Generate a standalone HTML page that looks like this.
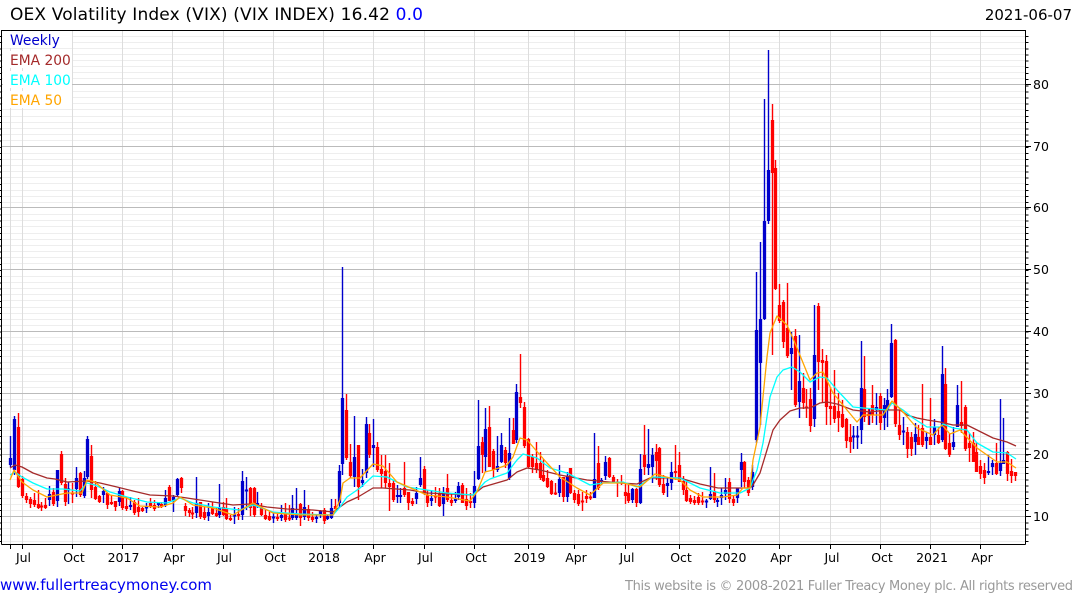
<!DOCTYPE html>
<html><head><meta charset="utf-8"><title>OEX Volatility Index</title>
<style>html,body{margin:0;padding:0;background:#fff;width:1075px;height:600px;overflow:hidden}svg{display:block}text{font-family:"DejaVu Sans","Liberation Sans",sans-serif}</style></head>
<body>
<svg width="1075" height="600" viewBox="0 0 1075 600" xmlns="http://www.w3.org/2000/svg">
<rect width="1075" height="600" fill="#fff"/>
<g shape-rendering="crispEdges" fill="none">
<path stroke="#eee" d="M2 541.5H1025M2 535.5H1025M2 528.5H1025M2 522.5H1025M2 510.5H1025M2 504.5H1025M2 498.5H1025M2 491.5H1025M2 485.5H1025M2 479.5H1025M2 473.5H1025M2 467.5H1025M2 461.5H1025M2 448.5H1025M2 442.5H1025M2 436.5H1025M2 430.5H1025M2 424.5H1025M2 417.5H1025M2 411.5H1025M2 405.5H1025M2 399.5H1025M2 387.5H1025M2 381.5H1025M2 374.5H1025M2 368.5H1025M2 362.5H1025M2 356.5H1025M2 350.5H1025M2 344.5H1025M2 337.5H1025M2 325.5H1025M2 319.5H1025M2 313.5H1025M2 307.5H1025M2 300.5H1025M2 294.5H1025M2 288.5H1025M2 282.5H1025M2 276.5H1025M2 263.5H1025M2 257.5H1025M2 251.5H1025M2 245.5H1025M2 239.5H1025M2 233.5H1025M2 226.5H1025M2 220.5H1025M2 214.5H1025M2 202.5H1025M2 196.5H1025M2 190.5H1025M2 183.5H1025M2 177.5H1025M2 171.5H1025M2 165.5H1025M2 159.5H1025M2 153.5H1025M2 140.5H1025M2 134.5H1025M2 128.5H1025M2 122.5H1025M2 116.5H1025M2 109.5H1025M2 103.5H1025M2 97.5H1025M2 91.5H1025M2 78.5H1025M2 72.5H1025M2 66.5H1025M2 60.5H1025M2 54.5H1025M2 48.5H1025M2 42.5H1025M2 36.5H1025"/>
<path stroke="#ddd" d="M10.5 31V544M22.5 31V544M72.5 31V544M122.5 31V544M172.5 31V544M223.5 31V544M273.5 31V544M323.5 31V544M373.5 31V544M424.5 31V544M474.5 31V544M528.5 31V544M574.5 31V544M625.5 31V544M679.5 31V544M729.5 31V544M779.5 31V544M830.5 31V544M880.5 31V544M930.5 31V544M980.5 31V544"/>
<path stroke="#bbb" d="M2 84.5H1025M2 146.5H1025M2 207.5H1025M2 269.5H1025M2 331.5H1025M2 393.5H1025M2 454.5H1025M2 516.5H1025"/>
</g>
<g fill="#fff"><rect x="3" y="31" width="69" height="17"/><rect x="3" y="51" width="69" height="17"/><rect x="3" y="71" width="69" height="17"/><rect x="3" y="91" width="69" height="17"/></g>

<g fill="none">
<path stroke="#0000cc" stroke-width="1.4" d="M10.5 436V467M14.5 416V475M49.5 486V506M57.5 470V507M68.5 482V504M76.5 467V497M84.5 471V498M87.5 436V479M103.5 487V503M119.5 488V506M130.5 497V510M146.5 503V513M158.5 502V508M165.5 490V507M173.5 495V512M177.5 478V497M196.5 477V518M208.5 503V521M219.5 484V518M234.5 507V524M242.5 471V520M246.5 477V510M257.5 492V508M273.5 512V523M281.5 505V521M292.5 495V520M296.5 488V520M304.5 490V520M316.5 515V523M320.5 510V518M327.5 515V520M331.5 499V519M339.5 465V507M342.5 267V475M354.5 416V487M362.5 469V487M366.5 417V478M373.5 419V467M397.5 485V503M400.5 488V503M416.5 487V504M420.5 457V487M431.5 490V506M443.5 487V516M455.5 492V503M458.5 482V500M474.5 471V508M478.5 400V480M485.5 408V472M497.5 436V472M501.5 433V463M509.5 418V480M516.5 384V443M559.5 465V497M567.5 472V502M594.5 433V498M601.5 478V485M605.5 456V480M632.5 488V503M640.5 454V504M648.5 429V475M652.5 448V483M667.5 478V497M671.5 462V490M706.5 499V508M710.5 467V500M717.5 498V507M721.5 488V505M725.5 478V500M737.5 488V503M741.5 453V487M752.5 465V490M756.5 272V443M760.5 242V425M764.5 99V320M768.5 50V224M791.5 332V390M799.5 335V418M814.5 305V427M853.5 426V449M857.5 426V449M861.5 341V444M869.5 408V425M876.5 393V425M884.5 398V430M887.5 389V427M891.5 324V398M903.5 417V445M915.5 423V455M926.5 432V449M934.5 419V445M942.5 346V442M953.5 427V450M957.5 385V427M988.5 455V475M992.5 460V475M1000.5 399V476M1003.5 418V464"/>
<path stroke="#0000cc" stroke-width="3.3" d="M10.5 458V465M14.5 419V470M49.5 494V500M57.5 470V501M68.5 488.5V490.5M76.5 478V489M84.5 478V496M87.5 439V477M103.5 491V495M119.5 491V502M130.5 505V507M146.5 506.5V508.5M158.5 503V505M165.5 498V505M173.5 497V501M177.5 479V495M196.5 503V513M208.5 512V516M219.5 508V515M234.5 514.5V516.5M242.5 481V515M246.5 489.5V491.5M257.5 503V505M273.5 516.5V518.5M281.5 515V518M292.5 508V518M296.5 515V518M304.5 507V517M316.5 517V519M320.5 511V515M327.5 516V519M331.5 508V518M339.5 471V503M342.5 398V464M354.5 457V477M362.5 480V483M366.5 424V473M373.5 445V448M397.5 495V497M400.5 495V497M416.5 493V499M420.5 478V485M431.5 498V501M443.5 493V504M455.5 498V501M458.5 486V497M474.5 486V503M478.5 446V479M485.5 429V457M497.5 466V470M501.5 445V462M509.5 453V478M516.5 392V440M559.5 479V493M567.5 476V497M594.5 479V498M601.5 480V482M605.5 462V476M632.5 489V500M640.5 469V503M648.5 464V468M652.5 455V467M667.5 483V486M671.5 472V483M706.5 500.5V502.5M710.5 494V499M717.5 500V502M721.5 495V498M725.5 490V494M737.5 488V498M741.5 462V470M752.5 472V487M756.5 330V440M760.5 319V363M764.5 221V319M768.5 170V221M791.5 348V354M799.5 381V402M814.5 355V419M853.5 435.5V437.5M857.5 435.5V437.5M861.5 388V430M869.5 412V415M876.5 407V410M884.5 405V418M887.5 400V410M891.5 343V397M903.5 430.5V432.5M915.5 434V442M926.5 437V441M934.5 427V435M942.5 374V440M953.5 442V447M957.5 405V427M988.5 471V473M992.5 463V467M1000.5 463V471M1003.5 460V464"/>
<path stroke="#ff0000" stroke-width="1.4" d="M18.5 413V488M22.5 476V498M26.5 493V503M30.5 497V508M34.5 493V507M38.5 490V509M41.5 502V511M45.5 498V509M53.5 488V506M61.5 451V485M65.5 478V506M72.5 483V503M80.5 472V497M91.5 445V498M95.5 481V500M99.5 495V503M107.5 493V509M111.5 495V505M115.5 501V511M122.5 490V510M126.5 497V511M134.5 500V515M138.5 498V517M142.5 507V512M150.5 498V508M154.5 500V511M161.5 502V508M169.5 485V501M181.5 477V493M185.5 503V516M189.5 508V517M192.5 507V519M200.5 502V519M204.5 507V520M212.5 502V515M216.5 508V517M223.5 502V516M226.5 498V520M230.5 515V521M238.5 508V520M250.5 487V516M254.5 487V517M261.5 503V516M265.5 510V520M269.5 512V521M277.5 514V521M285.5 503V522M289.5 505V521M300.5 503V526M308.5 505V521M312.5 512V522M324.5 508V524M335.5 499V512M346.5 394V460M350.5 444V478M358.5 445V500M369.5 424V458M377.5 442V472M381.5 455V488M385.5 455V488M389.5 463V511M393.5 480V502M404.5 462V497M408.5 492V510M412.5 498V506M424.5 466V495M427.5 490V507M435.5 487V503M439.5 488V507M447.5 474V502M451.5 493V506M462.5 483V502M466.5 488V510M470.5 493V508M482.5 437V473M489.5 406V463M493.5 449V478M505.5 447V468M513.5 418V442M520.5 354V408M524.5 402V448M528.5 438V468M532.5 454V473M536.5 442V473M540.5 452V480M543.5 459V482M547.5 470V488M551.5 480V495M555.5 483V495M563.5 477V502M570.5 468V494M574.5 490V503M578.5 490V506M582.5 492V511M586.5 490V503M590.5 492V500M598.5 446V490M609.5 457V478M613.5 475V483M617.5 479V497M621.5 475V485M625.5 483V504M628.5 483V503M636.5 488V507M644.5 425V475M656.5 444V480M659.5 447V487M663.5 475V495M675.5 445V480M679.5 452V482M683.5 476V495M686.5 480V502M690.5 495V504M694.5 496V505M698.5 493V505M702.5 492V505M714.5 473V503M729.5 478V503M733.5 495V506M744.5 461V488M748.5 477V496M772.5 104V355M775.5 160V290M779.5 284V323M783.5 300V348M787.5 283V358M795.5 329V407M803.5 373V409M806.5 389V418M810.5 388V432M818.5 303V390M822.5 349V403M826.5 355V425M830.5 387V425M834.5 370V423M838.5 393V432M842.5 400V428M846.5 418V448M850.5 424V453M864.5 356V422M868.5 408V425M872.5 385V423M880.5 393V430M895.5 339V427M899.5 410V440M907.5 427V458M911.5 432V456M918.5 425V445M922.5 384V447M930.5 398V445M938.5 427V444M945.5 368V450M949.5 433V457M961.5 381V433M965.5 405V451M969.5 433V462M973.5 432V462M976.5 442V470M980.5 460V479M984.5 463V484M996.5 443V475M1007.5 451V481M1011.5 459V483M1015.5 472V481"/>
<path stroke="#ff0000" stroke-width="3.3" d="M18.5 427V487M22.5 479V496M26.5 496V500M30.5 499V504M34.5 500V505M38.5 504V508M41.5 505.5V507.5M45.5 505V508M53.5 492V504M61.5 454V483M65.5 484V502M72.5 492.5V494.5M80.5 473V495M91.5 456V490M95.5 487V499M99.5 496V502M107.5 493V505M111.5 502V504M115.5 501V507M122.5 491V508M126.5 506V509M134.5 502V513M138.5 507V512M142.5 508V511M150.5 503V507M154.5 505V509M161.5 504V507M169.5 487V501M181.5 478V488M185.5 506V511M189.5 510V513M192.5 512.5V514.5M200.5 502V517M204.5 512V518M212.5 508V514M216.5 513V516M223.5 507V515M226.5 508V519M230.5 518V520M238.5 514V516M250.5 488V508M254.5 488V515M261.5 508V515M265.5 515V519M269.5 516V520M277.5 517V519M285.5 513V520M289.5 517.5V519.5M300.5 504V518M308.5 509V518M312.5 517V520M324.5 510V521M335.5 506V509M346.5 410V458M350.5 462V476M358.5 445V487M369.5 433V455M377.5 447V470M381.5 469V474M385.5 471V483M389.5 483V487M393.5 483V500M404.5 488V495M408.5 492V503M412.5 501V504M424.5 469V493M427.5 495V503M435.5 495.5V497.5M439.5 493V506M447.5 488V500M451.5 500V503M462.5 485V503M466.5 499V506M470.5 501V503M482.5 442V455M489.5 427V467M493.5 451V470M505.5 450V463M513.5 430V444M520.5 397V403M524.5 407V446M528.5 439V467M532.5 457V467M536.5 463V470M540.5 463V478M543.5 475V481M547.5 478V487M551.5 481V494M555.5 492.5V494.5M563.5 477V497M570.5 468V493M574.5 493V500M578.5 494V504M582.5 500.5V502.5M586.5 496V499M590.5 496.5V498.5M598.5 463V488M609.5 458V477M613.5 477V482M617.5 481.5V483.5M621.5 481.5V483.5M625.5 492V496M628.5 493V501M636.5 489V503M644.5 455V467M656.5 452V461M659.5 448V485M663.5 484V493M675.5 471V473M679.5 465V482M683.5 481V490M686.5 490V501M690.5 498V502M694.5 500V503M698.5 497V503M702.5 500.5V502.5M714.5 491V500M729.5 482V499M733.5 499V503M744.5 462V482M748.5 480V493M772.5 120V173M775.5 168V289M779.5 305V321M783.5 302V342M787.5 328V356M795.5 336V405M803.5 388V403M806.5 406.5V408.5M810.5 399V426M818.5 306V362M822.5 360V363M826.5 361V407M830.5 406V409M834.5 406V419M838.5 411V418M842.5 414V427M846.5 419V441M850.5 437V442M864.5 389V417M868.5 414V416M872.5 405V415M880.5 396V423M895.5 340V424M899.5 425V435M907.5 432V449M911.5 437V449M918.5 437V445M922.5 428V445M930.5 437V445M938.5 435V443M945.5 384V449M949.5 443V455M961.5 422V426M965.5 407V449M969.5 443V448M973.5 443V462M976.5 452V472M980.5 466V474M984.5 470V478M996.5 463V474M1007.5 452V474M1011.5 471V476M1015.5 472V476"/>
</g>

<g fill="none" stroke-width="1.3" stroke-linejoin="round">
<polyline stroke="#a52a2a" points="10,468 15,465 22,467 33,473 47,478 55,479 67,482 87,481 100,483 117,487 133,491 150,495 173,496 187,498 213,502 233,505 250,504 267,507 287,509 313,510 333,512 340,507 347,502 358,497 373,488 383,488 410,490 427,493 473,495 483,487 507,480 517,472 527,468 540,470 560,475 587,480 620,483 637,484 650,478 680,478 700,484 718,488 750,488 753,485 760,473 767,450 773,430 780,420 790,411 800,408 810,408 820,403 827,402 837,404 853,410 870,412 887,410 900,410 907,415 917,418 927,420 940,422 953,425 967,425 977,430 993,438 1007,442 1016,446"/>
<polyline stroke="#00ffff" points="10,475 15,472 22,477 33,483 47,489 63,489 80,491 87,483 95,485 110,492 127,497 147,502 167,503 180,498 193,503 213,507 240,510 253,505 273,512 300,514 333,515 340,507 347,497 360,488 373,476 387,477 407,487 427,490 447,493 473,495 485,482 490,479 507,473 517,460 523,454 537,458 550,468 567,473 590,485 603,483 623,482 637,487 653,477 680,478 700,488 720,493 740,493 750,488 757,470 763,443 770,397 777,377 783,370 792,367 800,372 810,382 820,377 827,378 837,390 853,407 863,408 887,410 892,403 903,410 913,418 927,427 940,427 943,424 953,428 967,430 977,443 993,452 1007,453 1016,459"/>
<polyline stroke="#ffa500" points="10,480 14,470 22,482 33,490 47,497 57,495 67,493 82,493 87,480 95,482 110,495 127,498 140,506 160,507 173,503 180,497 193,505 213,508 233,515 253,503 273,513 300,515 333,515 340,500 343,483 350,478 360,478 373,464 383,466 397,482 427,495 447,497 470,501 477,492 485,472 493,470 507,465 513,457 520,438 527,440 547,463 560,477 577,488 590,495 603,483 623,483 640,487 655,474 670,478 680,480 690,490 703,497 723,497 737,495 743,488 750,488 753,460 760,427 767,357 770,333 777,316 787,325 795,343 810,380 817,373 823,372 833,393 847,410 857,422 863,415 883,415 892,401 903,412 917,428 933,435 942,425 950,434 960,430 977,448 997,462 1007,462 1016,468"/>
</g>

<g shape-rendering="crispEdges" fill="none" stroke="#000">
<path stroke-width="1" d="M1.5 30V544.5M1.5 30.5H1025.5M1025.5 30V544.5M1.5 544.5H1025.5"/>
<path d="M10.5 544V549M22.5 544V549M72.5 544V549M122.5 544V549M172.5 544V549M223.5 544V549M273.5 544V549M323.5 544V549M373.5 544V549M424.5 544V549M474.5 544V549M528.5 544V549M574.5 544V549M625.5 544V549M679.5 544V549M729.5 544V549M779.5 544V549M830.5 544V549M880.5 544V549M930.5 544V549M980.5 544V549"/>
<path d="M1026 84.5H1031M1026 146.5H1031M1026 207.5H1031M1026 269.5H1031M1026 331.5H1031M1026 393.5H1031M1026 454.5H1031M1026 516.5H1031"/>
<line x1="1027" y1="36" x2="1027" y2="544" stroke-width="3" stroke-dasharray="1 5.157"/>
<line x1="0.5" y1="36" x2="0.5" y2="544" stroke-width="1" stroke-dasharray="1 5.157"/>
</g>

<text x="10" y="20" font-size="17" fill="#000" textLength="413" lengthAdjust="spacing">OEX Volatility Index (VIX) (VIX INDEX) 16.42 <tspan fill="#0000ff">0.0</tspan></text>
<text x="1072" y="20" font-size="15" fill="#000" text-anchor="end">2021-06-07</text>
<text x="10" y="45" font-size="13.8" fill="#0000cc">Weekly</text>
<text x="10" y="65" font-size="13.8" fill="#a52a2a">EMA 200</text>
<text x="10" y="85" font-size="13.8" fill="#00ffff">EMA 100</text>
<text x="10" y="105" font-size="13.8" fill="#ffa500">EMA 50</text>

<g font-size="12.5" fill="#000">
<text x="1033" y="89">80</text><text x="1033" y="151">70</text><text x="1033" y="212">60</text><text x="1033" y="274">50</text><text x="1033" y="336">40</text><text x="1033" y="398">30</text><text x="1033" y="459">20</text><text x="1033" y="521">10</text>
</g>
<g font-size="12.5" fill="#000" text-anchor="middle">
<text x="23.5" y="562">Jul</text><text x="74" y="562">Oct</text><text x="123.5" y="562">2017</text><text x="174" y="562">Apr</text><text x="224.5" y="562">Jul</text><text x="275" y="562">Oct</text><text x="324" y="562">2018</text><text x="375" y="562">Apr</text><text x="425.5" y="562">Jul</text><text x="476" y="562">Oct</text><text x="529.5" y="562">2019</text><text x="576" y="562">Apr</text><text x="627" y="562">Jul</text><text x="681" y="562">Oct</text><text x="730.5" y="562">2020</text><text x="781" y="562">Apr</text><text x="832" y="562">Jul</text><text x="882" y="562">Oct</text><text x="932" y="562">2021</text><text x="982" y="562">Apr</text>
</g>
<text x="0" y="590" font-size="15" fill="#0000ee" textLength="212" lengthAdjust="spacing">www.fullertreacymoney.com</text>
<text x="625" y="590" font-size="13" fill="#999999" textLength="448" lengthAdjust="spacing">This website is © 2008-2021 Fuller Treacy Money plc. All rights reserved</text>
</svg>
</body></html>
